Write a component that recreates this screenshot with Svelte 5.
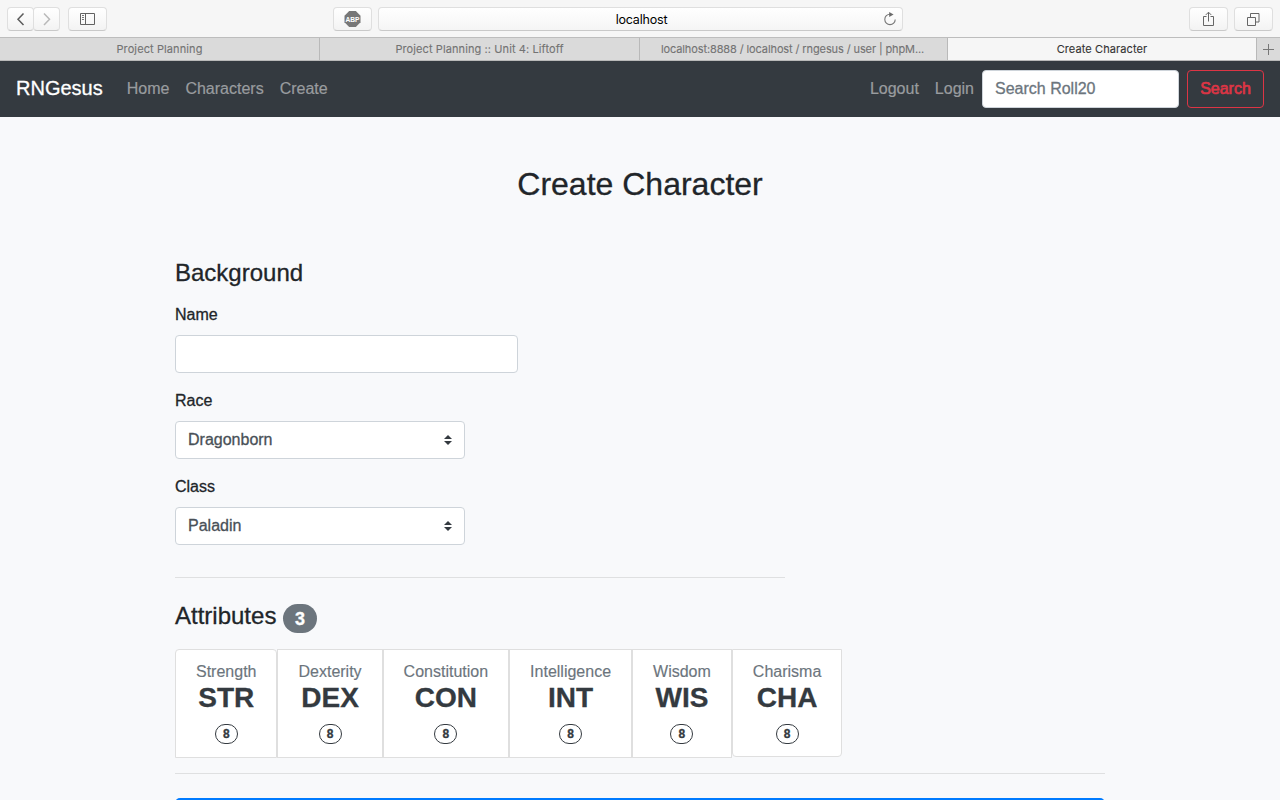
<script>
  const tabs = [
    { title: 'Project Planning', width: 320 },
    { title: 'Project Planning :: Unit 4: Liftoff', width: 320 },
    { title: 'localhost:8888 / localhost / rngesus / user | phpM...', width: 308, tight: true },
    { title: 'Create Character', width: 309, active: true }
  ];
  const attributes = [
    { name: 'Strength', short: 'STR', score: 8 },
    { name: 'Dexterity', short: 'DEX', score: 8 },
    { name: 'Constitution', short: 'CON', score: 8 },
    { name: 'Intelligence', short: 'INT', score: 8 },
    { name: 'Wisdom', short: 'WIS', score: 8 },
    { name: 'Charisma', short: 'CHA', score: 8 }
  ];
</script>

{#snippet arrows()}
  <svg class="arrows" width="8" height="10" viewBox="0 0 4 5"><path fill="#343a40" d="M2 0L0 2h4zm0 5L0 3h4z" /></svg>
{/snippet}

<div class="window">
  <div class="toolbar">
    <div class="side">
      <div class="pair">
        <button class="tool" aria-label="Back"><svg width="25" height="22" viewBox="0 0 25 22"><path d="M15.500 5.500L10 11.200l5.500 5.700" fill="none" stroke="#5c5c5c" stroke-width="1.500" /></svg></button>
        <button class="tool" aria-label="Forward"><svg width="25" height="22" viewBox="0 0 25 22"><path d="M10 5.500l5.500 5.700-5.500 5.700" fill="none" stroke="#b9b9b9" stroke-width="1.500" /></svg></button>
      </div>
      <button class="tool wide" aria-label="Sidebar">
        <svg width="15" height="12" viewBox="0 0 15 12"><path d="M.5.5h14v11H.5zM5.500 .5v11" fill="none" stroke="#626262" /><path d="M2 2.500h2M2 4.500h2M2 6.500h2" stroke="#777" /></svg>
      </button>
    </div>
    <div class="center">
      <button class="tool wide" aria-label="Ad blocker">
        <svg class="badge" width="37" height="22" viewBox="-10.500 -3 37 22"><path d="M4.700 0h6.600L16 4.700v6.600L11.300 16H4.700L0 11.300V4.700z" fill="#777" /><text x="8" y="10.800" text-anchor="middle" textLength="14" lengthAdjust="spacingAndGlyphs" font-family="Liberation Sans, sans-serif" font-weight="700" font-size="8" fill="#fff">ABP</text></svg>
      </button>
      <div class="address">
        <span>localhost</span>
        <svg class="reload" width="14" height="14" viewBox="0 0 14 14"><path d="M7 2.200A5.200 5.200 0 1 0 12.200 7.400" fill="none" stroke="#777" stroke-width="1.100" /><path d="M6.200 0v5L10.600 2.500z" fill="#6a6a6a" /></svg>
      </div>
    </div>
    <div class="side right">
      <button class="tool wide" aria-label="Share"><svg width="13" height="16" viewBox="0 0 13 16"><path d="M4.500 5.500h-3v9h10v-9h-3M6.500 10.500V1.300M3.800 3.900l2.700-2.700 2.700 2.700" fill="none" stroke="#666" /></svg></button>
      <button class="tool wide" aria-label="Tabs"><svg width="13" height="13" viewBox="0 0 13 13"><path d="M.5 4.500h8v8h-8zM3.500 4V.5h8.500v8.500H9" fill="none" stroke="#666" /></svg></button>
    </div>
  </div>
  <div class="tabs">
    {#each tabs as tab}
      <div class="tab" class:active={tab.active} class:tight={tab.tight} style="width:{tab.width}px">{tab.title}</div>
    {/each}
    <div class="plus"><svg width="11" height="11" viewBox="0 0 11 11"><path d="M5.500 0v11M0 5.500h11" stroke="#777" /></svg></div>
  </div>

  <nav>
    <span class="brand">RNGesus</span>
    <span class="link">Home</span>
    <span class="link">Characters</span>
    <span class="link">Create</span>
    <div class="account">
      <span class="link">Logout</span>
      <span class="link">Login</span>
      <input class="search" placeholder="Search Roll20" />
      <button class="search-button">Search</button>
    </div>
  </nav>

  <main>
    <h2>Create Character</h2>
    <h4>Background</h4>
    <label for="name">Name</label>
    <input id="name" class="control" />
    <span class="label">Race</span>
    <div class="control select"><span>Dragonborn</span>{@render arrows()}</div>
    <span class="label">Class</span>
    <div class="control select"><span>Paladin</span>{@render arrows()}</div>
    <div class="rule short"></div>
    <h4 class="attributes-title">Attributes <span class="points">3</span></h4>
    <div class="attributes">
      {#each attributes as attribute}
        <div class="attribute">
          <span class="full">{attribute.name}</span>
          <strong>{attribute.short}</strong>
          <span class="score">{attribute.score}</span>
        </div>
      {/each}
    </div>
    <div class="rule"></div>
    <div class="submit"></div>
  </main>
</div>

<style>
  :global(body) { margin: 0; overflow: hidden; }
  .window, .window * { box-sizing: border-box; }
  .window {
    width: 1280px; height: 800px; overflow: hidden;
    background: #f8f9fb; color: #212529;
    font: 16px/24px "Liberation Sans", Arial, sans-serif;
  }
  button, input { font: inherit; margin: 0; }
  svg { display: block; flex: none; }

  .toolbar { height: 37px; background: #f6f6f6; display: flex; justify-content: space-between; padding: 7px 7px 0; }
  .side { display: flex; gap: 8px; width: 326px; }
  .right { justify-content: flex-end; gap: 6px; }
  .pair { display: flex; }
  .tool {
    width: 27px; height: 24px; padding: 0; display: flex; align-items: center; justify-content: center;
    border: 1px solid #dfdfdf; border-bottom-color: #c9c9c9; border-radius: 4px;
    background: linear-gradient(#fff, #f3f3f3);
  }
  .pair .tool + .tool { margin-left: -1px; }
  .wide { width: 39px; }
  .center { display: flex; gap: 6px; width: 570px; margin-right: auto; }
  .address {
    width: 525px; height: 24px; display: flex; align-items: center; position: relative; justify-content: center;
    border: 1px solid #dfdfdf; border-bottom-color: #c9c9c9; border-radius: 4px; padding: 1px 0 0 2px;
    background: linear-gradient(#fff, #f5f5f5); color: #000; font: 12.500px/21px Inter, sans-serif; letter-spacing: -.2px;
  }
  .reload { position: absolute; right: 5px; top: 4px; }

  .tabs {
    height: 24px; display: flex; background: #dadada;
    border-top: 1px solid #bdbdbd; border-bottom: 1px solid #b9b9b9;
    font: 11px/22px Inter, sans-serif; color: #737373; letter-spacing: .1px; -webkit-text-stroke: .1px;
  }
  .tab { flex: none; text-align: center; border-right: 1px solid #b9b9b9; white-space: nowrap; overflow: hidden; }
  .tab.active { background: #f6f6f6; color: #333; }
  .tab.tight { letter-spacing: -.11px; padding-right: 2px; }
  .plus { flex: 1; display: flex; align-items: center; justify-content: center; }

  nav, main { -webkit-text-stroke: .3px; }
  nav { height: 56px; background: #343a40; display: flex; align-items: center; padding: 0 16px; }
  .brand { color: #fff; font-size: 20px; line-height: 30px; margin: 0 16px 2px 0; }
  .link { color: #999c9f; padding: 0 8px; -webkit-text-stroke: .2px; }
  .account { margin-left: auto; display: flex; align-items: center; }
  .search, .control { border: 1px solid #ced4da; border-radius: 4px; background: #fff; height: 38px; padding: 0 12px; color: #495057; outline: 0; }
  .search { width: 197px; margin-right: 8px; }
  .search::placeholder { color: #6c757d; opacity: 1; }
  .search-button { width: 77px; height: 38px; padding: 0; border: 1px solid #dc3545; border-radius: 4px; background: none; color: #dc3545; -webkit-text-stroke: .7px #dc3545; }

  main { width: 930px; margin-left: 175px; padding-top: 48px; }
  h2, h4 { font-weight: 400; margin: 0; }
  h2 { font-size: 32px; line-height: 38px; text-align: center; }
  h4 { font-size: 24px; line-height: 29px; margin: 55px 0 0; }
  label, .label { display: block; line-height: 24px; margin: 16px 0 8px; }
  .control { display: block; width: 343px; }
  .select { width: 290px; display: flex; align-items: center; justify-content: space-between; }
  .rule { height: 1px; background: #dfe0e1; margin-top: 16px; }
  .short { width: 610px; margin-top: 32px; }
  .attributes-title { display: flex; gap: 7px; height: 33px; margin: 23px 0 15px; }
  .points { width: 34px; height: 29px; margin-top: 3px; border-radius: 15px; background: #6c757d; color: #fff; font-size: 18px; font-weight: 700; line-height: 30px; text-align: center; padding-right: 1px; }
  .attributes { display: flex; height: 108px; }
  .attribute {
    border: 1px solid #dfdfdf; background: #fff; padding: 12px 20px; margin-bottom: -1px;
    display: flex; flex-direction: column; align-items: center;
  }
  .attribute:first-child { border-radius: 4px 4px 0 0; }
  .attribute:last-child { border-radius: 0 0 4px 4px; margin-bottom: 0; }
  .full { color: #6c757d; line-height: 19px; -webkit-text-stroke: .15px; }
  strong { color: #343a40; font-size: 28px; line-height: 34px; }
  .score { width: 23px; height: 20px; margin-top: 9px; border: 1px solid #343a40; border-radius: 10px; color: #343a40; font-size: 12px; line-height: 18px; font-weight: 700; text-align: center; }
  .submit { height: 48px; margin-top: 24px; border-radius: 5px; background: #007bff; }
</style>
